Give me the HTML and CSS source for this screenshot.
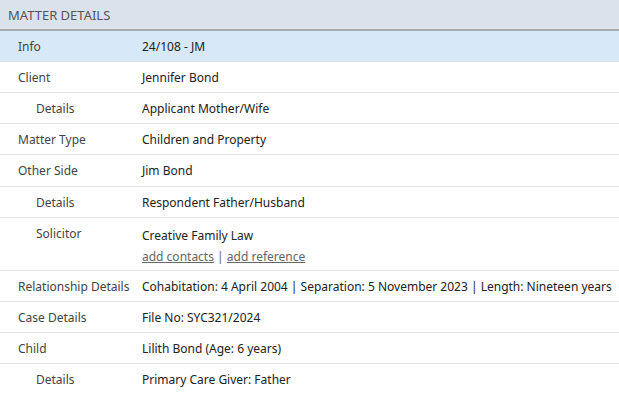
FILE: index.html
```html
<!DOCTYPE html>
<html>
<head>
<meta charset="utf-8">
<link rel="stylesheet" href="styles.css">
</head>
<body>
<div class="panel">
  <div class="header">MATTER DETAILS</div>
  <div class="row selected"><div class="label">Info</div><div class="value">24/108 - JM</div></div>
  <div class="row"><div class="label">Client</div><div class="value">Jennifer Bond</div></div>
  <div class="row"><div class="label sub">Details</div><div class="value">Applicant Mother/Wife</div></div>
  <div class="row"><div class="label">Matter Type</div><div class="value">Children and Property</div></div>
  <div class="row plus"><div class="label">Other Side</div><div class="value">Jim Bond</div></div>
  <div class="row"><div class="label sub">Details</div><div class="value">Respondent Father/Husband</div></div>
  <div class="row tall"><div class="label sub">Solicitor</div><div class="value stack"><div>Creative Family Law</div><div class="links"><a href="#">add contacts</a> | <a href="#">add reference</a></div></div></div>
  <div class="row"><div class="label">Relationship Details</div><div class="value nowrap">Cohabitation: 4 April 2004 | Separation: 5 November 2023 | Length: Nineteen years</div></div>
  <div class="row"><div class="label">Case Details</div><div class="value">File No: SYC321/2024</div></div>
  <div class="row"><div class="label">Child</div><div class="value">Lilith Bond (Age: 6 years)</div></div>
  <div class="row last"><div class="label sub">Details</div><div class="value">Primary Care Giver: Father</div></div>
</div>
</body>
</html>
```
FILE: styles.css
```css
html, body {
  margin: 0;
  padding: 0;
  background: #ffffff;
}
body {
  font-family: "Noto Sans", "Open Sans", sans-serif;
  font-size: 12px;
  color: #222;
  overflow: hidden;
}
.panel {
  width: 619px;
}
.header {
  height: 29px;
  background: #dae3eb;
  border-bottom: 2px solid #a7acb1;
  color: #555;
  font-size: 13px;
  line-height: 30px;
  padding-left: 8px;
}
.row {
  display: flex;
  box-sizing: border-box;
  height: 31px;
  border-bottom: 1px solid #e2e2e2;
  line-height: 20px;
  padding-top: 6px;
}
.row.selected {
  background: #d7e9f8;
}
.row.plus {
  height: 32px;
}
.row.tall {
  height: 53px;
}
.row.last {
  border-bottom: none;
}
.label {
  width: 124px;
  padding-left: 18px;
  color: #444;
  flex: none;
}
.label.sub {
  width: 106px;
  padding-left: 36px;
}
.value {
  color: #222;
}
.value.stack {
  padding-top: 2px;
}
.nowrap {
  white-space: nowrap;
}
.links {
  color: #666;
  margin-top: 1px;
}
.links a {
  color: #666;
  text-decoration: underline;
}
```
